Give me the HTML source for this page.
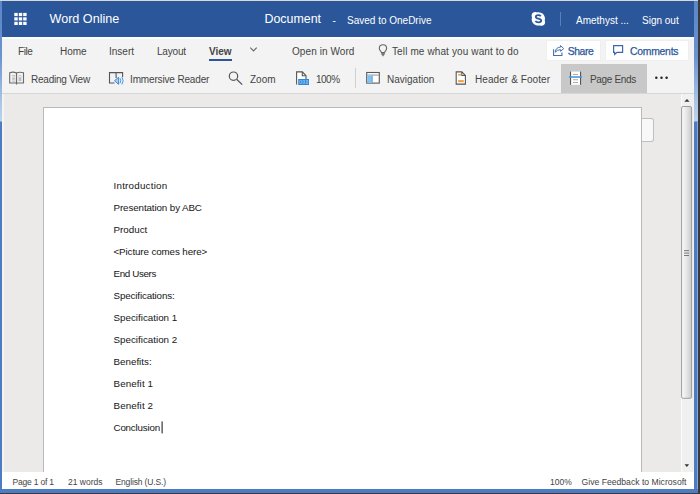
<!DOCTYPE html>
<html><head><meta charset="utf-8">
<style>
*{margin:0;padding:0;box-sizing:border-box}
html,body{width:700px;height:494px;overflow:hidden;background:#ebebeb}
body{position:relative;font-family:"Liberation Sans",sans-serif;color:#333}
.a{position:absolute}
.t{position:absolute;white-space:nowrap;line-height:1}
#topstrip{left:0;top:0;width:700px;height:1px;background:#d8d8d8}
#lframe{left:0;top:1px;width:2px;height:492px;background:linear-gradient(#5a86c8 0,#6a93cf 55px,#a9c4e6 100px,#bcd3ec 120px,#4d7cc3 121px,#4d7cc3 100%)}
#rframe{left:694px;top:1px;width:4px;height:492px;background:linear-gradient(#5a86c8 0,#6a93cf 55px,#a9c4e6 100px,#bcd3ec 120px,#4d7cc3 121px,#4d7cc3 100%)}
#rdark{left:698px;top:0;width:2px;height:494px;background:#3a3a3a}
#bframe{left:0;top:489px;width:698px;height:4px;background:#4d7cc3}
#bdark{left:0;top:493px;width:700px;height:1px;background:#3a3a3a}
#header{left:2px;top:1px;width:692px;height:36px;background:#2b579a}
#ribbon{left:2px;top:37px;width:692px;height:57px;background:#f3f3f3;border-bottom:1px solid #d6d6d6}
#ribtop{left:2px;top:37px;width:692px;height:2px;background:#fdfdfd}
#docarea{left:2px;top:94px;width:679px;height:378px;background:#ebeae8}
#scroll{left:681px;top:94px;width:13px;height:378px;background:#f0f0f0;border-left:1px solid #fbfbfb}
#page{left:43px;top:107px;width:599px;height:366px;background:#fff;border:1px solid #b9b9b9;border-bottom:none}
#tab{left:642px;top:118px;width:12px;height:23.5px;background:#f8f8f8;border:1px solid #bfbfbf;border-left:none;border-radius:0 3px 3px 0}
#status{left:2px;top:472px;width:692px;height:17px;background:#fff}
.hw{color:#fff}
.doc{font-size:9.8px;color:#151515}
.rb{font-size:10px;color:#444}
.st{font-size:8.5px;color:#444}
</style></head><body>
<div class="a" id="topstrip"></div>
<div class="a" id="header"></div>
<div class="a" id="ribbon"></div>
<div class="a" id="ribtop"></div>
<div class="a" id="docarea"></div>
<div class="a" id="scroll"></div>
<div class="a" style="left:2px;top:94px;width:2px;height:378px;background:#f6f4f0"></div>
<div class="a" id="page"></div>
<div class="a" id="tab"></div>
<div class="a" id="status"></div>
<div class="a" id="lframe"></div>
<div class="a" id="rframe"></div>
<div class="a" id="rdark"></div>
<div class="a" style="left:697px;top:122px;width:1px;height:367px;background:#86a9dc"></div>
<div class="a" style="left:0;top:491.5px;width:698px;height:1px;background:#7ea3d9"></div>
<div class="a" id="bframe"></div>
<div class="a" id="bdark"></div>


<!-- buttons -->
<div class="a" id="sharebtn" style="left:547px;top:41px;width:52.5px;height:19px;background:#fff;box-shadow:0 0 0 0.5px #ececec"></div>
<div class="a" id="combtn" style="left:606px;top:41px;width:81.5px;height:19px;background:#fff;box-shadow:0 0 0 0.5px #ececec"></div>
<div class="a" id="pagebg" style="left:561px;top:64px;width:86px;height:29px;background:#c8c8c8"></div>
<div class="a" style="left:355px;top:68px;width:1px;height:20px;background:#d0d0d0"></div>
<svg class="a" style="left:0;top:0" width="700" height="494" viewBox="0 0 700 494">
 <g fill="#fff">
  <rect x="14.3" y="12.9" width="3.4" height="3.2"/><rect x="18.8" y="12.9" width="3.4" height="3.2"/><rect x="23.2" y="12.9" width="3.4" height="3.2"/>
  <rect x="14.3" y="17.3" width="3.4" height="3.2"/><rect x="18.8" y="17.3" width="3.4" height="3.2"/><rect x="23.2" y="17.3" width="3.4" height="3.2"/>
  <rect x="14.3" y="21.8" width="3.4" height="3.2"/><rect x="18.8" y="21.8" width="3.4" height="3.2"/><rect x="23.2" y="21.8" width="3.4" height="3.2"/>
 </g>
 <!-- skype -->
 <path fill="#fff" d="M535.5 12 C533 12 531.6 13.5 531.6 15.8 C531.6 16.4 531.8 17 532 17.5 C531.8 18.1 531.7 18.7 531.7 19.3 C531.7 23 534.7 25.6 538.2 25.6 C538.8 25.6 539.3 25.5 539.8 25.4 C540.4 25.7 541 25.8 541.6 25.8 C543.6 25.8 545.1 24.3 545.1 22.2 C545.1 21.6 545 21 544.7 20.5 C544.9 19.9 545 19.3 545 18.6 C545 15 542.1 12.2 538.4 12.2 C537.8 12.2 537.3 12.3 536.8 12.4 C536.4 12.1 536 12 535.5 12Z"/>
 <path fill="none" stroke="#2b579a" stroke-width="1.8" d="M540.8 16.2 C540.2 15.4 539.4 15.1 538.3 15.1 C536.9 15.1 535.8 15.8 535.8 16.9 C535.8 19.1 541.2 18.3 541.2 20.6 C541.2 21.7 540 22.4 538.4 22.4 C537.2 22.4 536.1 22 535.4 21"/>
 <rect x="560" y="12" width="1" height="14" fill="#5b7fb6"/>
 <!-- chevron -->
 <path d="M250.3 47.7 L253.5 50.9 L256.7 47.7" fill="none" stroke="#6a6a6a" stroke-width="1.2"/>
 <!-- bulb -->
 <path d="M381.4 52.6 C381.4 51.2 379.3 50.3 379.3 48.4 C379.3 46.3 381 44.8 383 44.8 C385 44.8 386.6 46.3 386.6 48.4 C386.6 50.3 384.6 51.2 384.6 52.6 Z" fill="none" stroke="#666" stroke-width="1.1"/>
 <rect x="381.4" y="52.8" width="3.2" height="2.2" fill="#777"/>
 <rect x="382.1" y="55" width="1.8" height="1.2" fill="#888"/>
 <!-- share icon -->
 <g fill="none" stroke="#4470b0" stroke-width="1.1">
  <path d="M553.6 49.2 V55.5 H561.9 V52.4"/>
  <path stroke-width="1" stroke-linejoin="round" d="M555.3 52.2 Q555.6 47.3 560.6 47.1 V45.6 L563.7 48.6 L560.6 51.3 V49.7 Q557.2 49.6 555.3 52.2 Z"/>
 </g>
 <!-- comments icon -->
 <path d="M613.6 45.6 H622.6 V52.3 H617 L614.7 54.4 V52.3 H613.6 Z" fill="none" stroke="#3d67a8" stroke-width="1.2"/>
 <!-- reading view -->
 <g fill="none" stroke="#6b6b6b" stroke-width="1.1">
  <path d="M16.5 73 C15 72.3 11.5 72.1 9.7 72.7 V83 H16.5 Z"/>
  <path d="M16.5 73 C18 72.3 21.5 72.1 23.5 72.7 V83 H16.5 Z"/>
  <path d="M16.5 83 V84.6"/>
 </g>
 <g fill="#b8b8b8"><rect x="12" y="75.2" width="3" height="0.8"/><rect x="12" y="76.6" width="3" height="0.8"/><rect x="12" y="78" width="3" height="0.8"/><rect x="12" y="79.4" width="3" height="0.8"/><rect x="12" y="80.8" width="3" height="0.8"/></g>
 <rect x="18.6" y="75.3" width="2.8" height="5.8" fill="#bbb"/><rect x="19.3" y="76" width="1.4" height="1.4" fill="#fff"/>
 <!-- immersive reader -->
 <g fill="none" stroke="#555" stroke-width="1.1">
  <path d="M114.5 83 H109.5 V72.6 H116.1 V78"/>
  <path d="M116.1 72.6 H122.6 V77"/>
 </g>
 <path d="M114.5 80.7 L118.6 77.3 V84.3 Z" fill="#a9d0f3" stroke="#3a8ad8" stroke-width="1"/>
 <path d="M120 78.3 Q121.6 80.8 120 83.3 M121.9 77.1 Q124.4 80.8 121.9 84.5" fill="none" stroke="#3a8ad8" stroke-width="0.9"/>
 <!-- zoom -->
 <circle cx="233.5" cy="76.2" r="4.2" fill="none" stroke="#555" stroke-width="1.2"/>
 <path d="M236.6 79.3 L242.2 84.6" stroke="#555" stroke-width="1.3"/>
 <!-- 100% -->
 <path d="M296.6 84.4 V71.9 H302.4 L306 75.6 V78.9" fill="#fff" stroke="#555" stroke-width="1.1"/>
 <path d="M302.3 72 V75.7 H306" fill="none" stroke="#555" stroke-width="1.1"/>
 <rect x="298.2" y="79" width="10.8" height="6" fill="#2f86d8"/>
 <g fill="#9ccaf3"><rect x="299.5" y="80.3" width="2.2" height="3.4"/><rect x="302.7" y="80.3" width="2.2" height="3.4"/><rect x="305.9" y="80.3" width="2.2" height="3.4"/></g>
 <g fill="#2f86d8"><rect x="300.1" y="80.9" width="1" height="2.2"/><rect x="303.3" y="80.9" width="1" height="2.2"/><rect x="306.5" y="80.9" width="1" height="2.2"/></g>
 <!-- navigation -->
 <rect x="366.7" y="72.5" width="12.6" height="10.6" fill="#fff" stroke="#5a5a5a" stroke-width="1.1"/>
 <rect x="367.2" y="74.6" width="11.6" height="0.9" fill="#8a8a8a"/>
 <rect x="367.2" y="75.5" width="4.8" height="7.1" fill="#7fc3f2"/>
 <rect x="371.8" y="75.5" width="0.8" height="7.1" fill="#4a90d8"/>
 <!-- header footer -->
 <path d="M456.2 84.1 V71.9 H461.8 L465.4 75.5 V84.1 Z" fill="#fff" stroke="#555" stroke-width="1.1"/>
 <path d="M461.8 71.9 V75.5 H465.4" fill="none" stroke="#555" stroke-width="1.1"/>
 <rect x="458.1" y="73.9" width="3.2" height="1.6" fill="#f0a040"/>
 <rect x="458.1" y="80.1" width="5.7" height="2.1" fill="#f0a040"/>
 <!-- page ends -->
 <rect x="571" y="71.6" width="9.5" height="13.2" fill="#fff"/>
 <rect x="570" y="71.6" width="1.1" height="13.2" fill="#555"/>
 <rect x="580" y="71.6" width="1.1" height="13.2" fill="#555"/>
 <g fill="#999"><rect x="573" y="74" width="5" height="0.8"/><rect x="573" y="79.4" width="5" height="0.8"/><rect x="573" y="82.1" width="5" height="0.8"/></g>
 <rect x="569" y="76.2" width="13" height="1.6" fill="#4d98de"/>
 <!-- more dots -->
 <g fill="#222"><circle cx="656.3" cy="77.7" r="1.25"/><circle cx="661.5" cy="77.7" r="1.25"/><circle cx="666.6" cy="77.7" r="1.25"/></g>
 <!-- scrollbar -->
 <path d="M684.3 101.7 L687 98.9 L689.6 101.7 Z" fill="#333"/>
 <path d="M684.6 464.3 L689.1 464.3 L686.85 467.1 Z" fill="#333"/>
 <defs><linearGradient id="thumb" x1="0" x2="1" y1="0" y2="0"><stop offset="0" stop-color="#fbfbfb"/><stop offset="0.5" stop-color="#e6e6e6"/><stop offset="1" stop-color="#c9c9ca"/></linearGradient></defs>
 <rect x="681.6" y="106.5" width="10" height="291.8" rx="1.5" fill="url(#thumb)" stroke="#9c9c9c" stroke-width="1"/>
 <g fill="#6e6e6e"><rect x="684" y="250.2" width="5" height="0.9"/><rect x="684" y="252.6" width="5" height="0.9"/><rect x="684" y="255" width="5" height="0.9"/></g>
 <!-- cursor -->
 <rect x="161.6" y="421.4" width="1" height="12" fill="#111"/>
</svg>

<!-- header content -->
<div class="t hw" id="h_word" style="left:49.5px;top:13px;font-size:12.6px">Word Online</div>
<div class="t hw" id="h_doc" style="left:264.5px;top:13px;font-size:12.4px">Document</div>
<div class="t hw" id="h_dash" style="left:332.5px;top:15.5px;font-size:10px">-</div>
<div class="t hw" id="h_saved" style="left:347px;top:15.5px;font-size:10px">Saved to OneDrive</div>
<div class="t hw" id="h_am" style="left:576px;top:15.8px;font-size:10px">Amethyst ...</div>
<div class="t hw" id="h_so" style="left:642px;top:15.6px;font-size:10px">Sign out</div>

<!-- tabs -->
<div class="t rb" id="t_file" style="left:18px;top:46.8px;letter-spacing:-0.45px">File</div>
<div class="t rb" id="t_home" style="left:60px;top:46.8px">Home</div>
<div class="t rb" id="t_ins" style="left:109px;top:46.8px">Insert</div>
<div class="t rb" id="t_lay" style="left:157px;top:46.8px;letter-spacing:-0.2px">Layout</div>
<div class="t rb" id="t_view" style="left:209px;top:46.8px;font-weight:bold">View</div>
<div class="a" style="left:209px;top:59px;width:23px;height:2px;background:#2b579a"></div>
<div class="t rb" id="t_open" style="left:292px;top:47.4px;letter-spacing:0.08px">Open in Word</div>
<div class="t rb" id="t_tell" style="left:392px;top:47.4px;letter-spacing:0.12px">Tell me what you want to do</div>

<div class="t" id="t_share" style="left:567.8px;top:46.7px;font-size:10.4px;letter-spacing:-0.45px;color:#2b579a;-webkit-text-stroke:0.25px #2b579a">Share</div>
<div class="t" id="t_com" style="left:630px;top:46.7px;font-size:10.4px;letter-spacing:-0.25px;color:#2b579a;-webkit-text-stroke:0.25px #2b579a">Comments</div>
<!-- toolbar -->
<div class="t rb" id="b_read" style="left:31px;top:75px;letter-spacing:-0.22px">Reading View</div>
<div class="t rb" id="b_imm" style="left:130px;top:75px;letter-spacing:-0.15px">Immersive Reader</div>
<div class="t rb" id="b_zoom" style="left:250px;top:75px">Zoom</div>
<div class="t rb" id="b_100" style="left:316px;top:75px;letter-spacing:-0.5px">100%</div>
<div class="t rb" id="b_nav" style="left:387px;top:75px">Navigation</div>
<div class="t rb" id="b_hf" style="left:475px;top:75px;letter-spacing:0.08px">Header &amp; Footer</div>
<div class="t rb" id="b_pe" style="left:590px;top:75px;letter-spacing:-0.35px">Page Ends</div>

<!-- document -->
<div class="t doc" style="left:113.5px;top:181px;letter-spacing:0.23px">Introduction</div>
<div class="t doc" style="left:113.5px;top:203px;letter-spacing:-0.11px">Presentation by ABC</div>
<div class="t doc" style="left:113.5px;top:225px">Product</div>
<div class="t doc" style="left:113.5px;top:247px;letter-spacing:-0.11px">&lt;Picture comes here&gt;</div>
<div class="t doc" style="left:113.5px;top:269px;letter-spacing:-0.37px">End Users</div>
<div class="t doc" style="left:113.5px;top:291px;letter-spacing:-0.14px">Specifications:</div>
<div class="t doc" style="left:113.5px;top:313px;letter-spacing:0px">Specification 1</div>
<div class="t doc" style="left:113.5px;top:335px;letter-spacing:0px">Specification 2</div>
<div class="t doc" style="left:113.5px;top:357px">Benefits:</div>
<div class="t doc" style="left:113.5px;top:379px;letter-spacing:0.1px">Benefit 1</div>
<div class="t doc" style="left:113.5px;top:401px;letter-spacing:0.1px">Benefit 2</div>
<div class="t doc" style="left:113.5px;top:423px;letter-spacing:-0.2px">Conclusion</div>

<!-- status -->
<div class="t st" style="left:12.5px;top:477.7px;letter-spacing:-0.2px">Page 1 of 1</div>
<div class="t st" style="left:68px;top:477.7px">21 words</div>
<div class="t st" style="left:115.5px;top:477.7px;letter-spacing:-0.15px">English (U.S.)</div>
<div class="t st" style="left:550px;top:477.7px">100%</div>
<div class="t st" style="left:581.5px;top:477.7px;font-size:8.65px">Give Feedback to Microsoft</div>
</body></html>
